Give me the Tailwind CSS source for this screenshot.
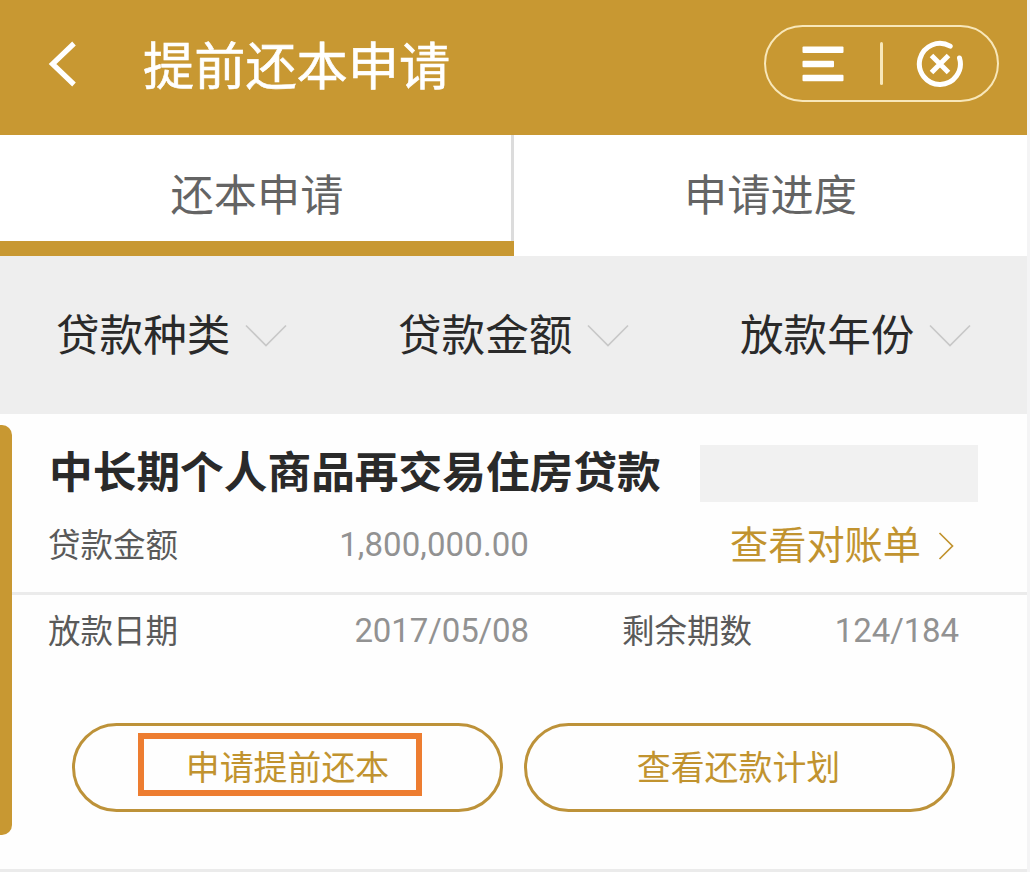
<!DOCTYPE html>
<html lang="zh-CN">

<head>
    <meta charset="UTF-8" />
    <meta name="viewport" content="width=device-width, initial-scale=1.0" />
    <title>提前还本申请</title>
    <script src="https://cdn.jsdelivr.net/npm/@tailwindcss/browser@4"></script>
</head>

<body class="w-[1030px] h-[872px] overflow-hidden bg-[#f4f4f5] font-['Noto_Sans_CJK_SC',sans-serif] whitespace-nowrap">
    <div class="w-[1027px] h-full flex flex-col bg-white">

        <!-- Navbar -->
        <header class="h-[135px] shrink-0 flex items-start justify-between bg-[#c89832] pl-[48px] pr-[28px]">
            <div class="flex items-start">
                <svg class="w-[30px] h-[48px] mt-[40px]" viewBox="0 0 30 48" fill="none" stroke="#fff" stroke-width="5.2">
                    <path d="M26 3.5 4.5 24 26 44.5" />
                </svg>
                <h1 class="ml-[65px] mt-[24px] text-[51.2px] leading-[78px] text-white [-webkit-text-stroke:0.6px_#fff]">提前还本申请</h1>
            </div>
            <div class="w-[235px] h-[77px] mt-[25px] flex items-center rounded-full border-[2.5px] border-[#f8e7b9] pl-[36px]">
                <svg class="w-[42px] h-[36px]" viewBox="0 0 42 36" fill="#fff">
                    <rect x="0.5" y="0.5" width="41" height="6.5" rx="1" />
                    <rect x="0.5" y="14.7" width="31.5" height="6.5" rx="1" />
                    <rect x="0.5" y="28.7" width="41" height="6.5" rx="1" />
                </svg>
                <span class="w-[3px] h-[43px] ml-[36px] rounded-sm bg-[#f8e7b9]"></span>
                <svg class="w-[50px] h-[50px] ml-[32px]" viewBox="0 0 50 50" fill="none" stroke="#fff" stroke-width="5" stroke-linecap="round">
                    <path d="M35.2 7.2A20.5 20.5 0 1 0 44.5 19" />
                    <path d="M16.5 16.5 33.5 33.5M33.5 16.5 16.5 33.5" stroke-linecap="butt" />
                </svg>
            </div>
        </header>

        <!-- Tabs -->
        <nav class="h-[121px] shrink-0 flex text-[43.2px] leading-[64px] text-[#646464] text-center">
            <div class="w-[514px] flex flex-col justify-between">
                <div class="flex-1 border-r-[3px] border-[#dcdcdc] pt-[25px] pl-[3px]">还本申请</div>
                <div class="h-[15px] bg-[#c89832]"></div>
            </div>
            <div class="flex-1 pt-[25px]">申请进度</div>
        </nav>

        <!-- Filters -->
        <div class="h-[158px] shrink-0 flex bg-[#eee] pl-[56px] pt-[44px] text-[43.6px] leading-[64px] text-[#2a2a2a]">
            <div class="w-[342px] flex">
                <span>贷款种类</span>
                <svg class="w-[42px] h-[24px] ml-[15px] mt-[24px]" viewBox="0 0 42 24" fill="none" stroke="#c8c8c8" stroke-width="1.7"><path d="M1 1.5 21 21.5 41 1.5" /></svg>
            </div>
            <div class="w-[342px] flex">
                <span>贷款金额</span>
                <svg class="w-[42px] h-[24px] ml-[15px] mt-[24px]" viewBox="0 0 42 24" fill="none" stroke="#c8c8c8" stroke-width="1.7"><path d="M1 1.5 21 21.5 41 1.5" /></svg>
            </div>
            <div class="flex">
                <span>放款年份</span>
                <svg class="w-[42px] h-[24px] ml-[15px] mt-[24px]" viewBox="0 0 42 24" fill="none" stroke="#c8c8c8" stroke-width="1.7"><path d="M1 1.5 21 21.5 41 1.5" /></svg>
            </div>
        </div>

        <!-- Loan card -->
        <section class="flex-1 flex bg-[#fefefe] border-b-[3px] border-[#ebebeb]">
            <div class="w-[12px] h-[410px] mt-[11px] shrink-0 rounded-r-[10px] bg-[#c89832]"></div>
            <div class="flex-1 flex flex-col">
                <div class="h-[181px] border-b-[3px] border-[#ebebeb] pl-[36px] pr-[49px]">
                    <div class="flex items-start justify-between pt-[23px]">
                        <h2 class="pl-px text-[43.7px] leading-[64px] font-bold text-[#2a2a2a]">中长期个人商品再交易住房贷款</h2>
                        <div class="w-[278px] h-[57px] mt-[8px] bg-[#f1f1f1]"></div>
                    </div>
                    <div class="flex items-center h-[64px] mt-[9px] text-[32.5px] text-[#5a5a5a]">
                        <span class="w-[190px]">贷款金额</span>
                        <span class="w-[291px] pt-[4px] text-right font-[Roboto] text-[33px] tracking-[0.1px] text-[#929292]">1,800,000.00</span>
                        <span class="ml-[201px] text-[38.2px] text-[#c1932f]">查看对账单</span>
                        <svg class="w-[16px] h-[28px] ml-[17px] mt-[5px]" viewBox="0 0 16 28" fill="none" stroke="#c1932f" stroke-width="1.7"><path d="M1.5 1 14.5 14 1.5 27" /></svg>
                    </div>
                </div>
                <div class="flex items-center h-[68px] pl-[36px] text-[32.5px] text-[#5a5a5a]">
                    <span class="w-[190px]">放款日期</span>
                    <span class="w-[291px] pt-[4px] text-right font-[Roboto] text-[33px] tracking-[-0.1px] text-[#929292]">2017/05/08</span>
                    <span class="ml-[93px]">剩余期数</span>
                    <span class="w-[207px] pt-[4px] text-right font-[Roboto] text-[33px] tracking-[-0.1px] text-[#929292]">124/184</span>
                </div>
                <div class="flex gap-[21px] mt-[60px] ml-[60px] text-[33.9px] text-[#c1932f]">
                    <div class="w-[431px] h-[89px] rounded-full border-[3px] border-[#bd9239] flex justify-center pr-[1px] pt-[7px]">
                        <!-- highlight frame -->
                        <div class="w-[284px] h-[63px] -ml-[14px] border-[6px] border-[#ed7d31] flex items-center justify-center pl-[15px] pt-[2px] leading-[50px]">申请提前还本</div>
                    </div>
                    <div class="w-[431px] h-[89px] rounded-full border-[3px] border-[#bd9239] flex items-center justify-center pr-[2px] pb-[2px]">查看还款计划</div>
                </div>
            </div>
        </section>
    </div>
</body>

</html>
